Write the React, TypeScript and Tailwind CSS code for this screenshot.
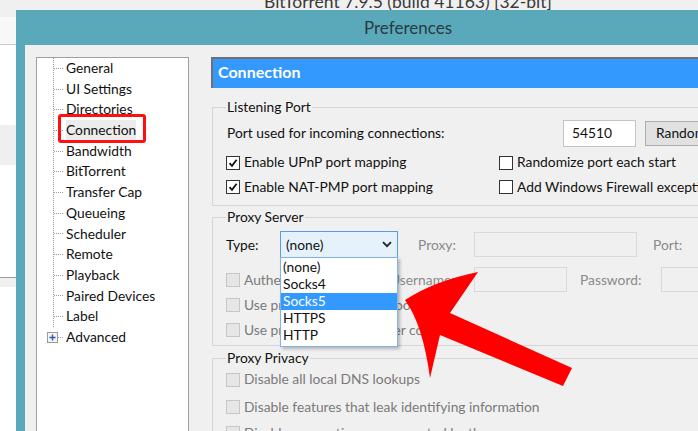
import React from "react";

const treeItems = [
  "General",
  "UI Settings",
  "Directories",
  "Connection",
  "Bandwidth",
  "BitTorrent",
  "Transfer Cap",
  "Queueing",
  "Scheduler",
  "Remote",
  "Playback",
  "Paired Devices",
  "Label",
];

const proxyTypes = ["(none)", "Socks4", "Socks5", "HTTPS", "HTTP"];

function CheckBox({ checked, disabled }: { checked?: boolean; disabled?: boolean }) {
  return (
    <span
      className={
        disabled
          ? "flex h-[14px] w-[14px] shrink-0 items-center justify-center border border-[#c6c6c6] bg-[#e6e6e6]"
          : "flex h-[14px] w-[14px] shrink-0 items-center justify-center border border-[#333] bg-white"
      }
    >
      {checked && (
        <svg width="10" height="10" viewBox="0 0 10 10">
          <path d="M1.5 5.2 L4 7.8 L8.6 1.8" fill="none" stroke="#111" strokeWidth="1.8" />
        </svg>
      )}
    </span>
  );
}

function CheckRow({
  label,
  checked,
  disabled,
  className = "",
}: {
  label: string;
  checked?: boolean;
  disabled?: boolean;
  className?: string;
}) {
  return (
    <div className={`flex items-center gap-[4px] ${className}`}>
      <CheckBox checked={checked} disabled={disabled} />
      <span className={disabled ? "text-[#7a7a7a]" : "text-[#111]"}>{label}</span>
    </div>
  );
}

function Group({ title, children, className = "" }: { title: string; children: React.ReactNode; className?: string }) {
  return (
    <fieldset className={`border border-[#d5d5d5] pl-[13px] ${className}`}>
      <legend className="px-[1px] text-[#111]">{title}</legend>
      {children}
    </fieldset>
  );
}

export default function App() {
  return (
    <div
      className="relative h-[431px] w-[698px] overflow-hidden bg-white text-[13.8px]"
      style={{ fontFamily: "Lato, 'Noto Sans', sans-serif" }}
    >
      {/* main window behind */}
      <div className="flex h-[10px] bg-[#f0f0f0] pl-[264px]">
        <span className="whitespace-nowrap text-[17.5px] leading-[4px] text-[#3a3a3a]">
          BitTorrent 7.9.5 (build 41163) [32-bit]
        </span>
      </div>
      <div className="flex w-[16px] flex-col">
        <div className="h-[7px] bg-[#f0f0f0]" />
        <div className="h-[28px] border-b border-[#c8c8c8] bg-[#f8f8f8]" />
        <div className="h-[80px] bg-white" />
        <div className="h-[40px] bg-[#efefef]" />
        <div className="h-[112px] bg-white" />
        <div className="h-[10px] border-t border-[#9a9a9a] bg-[#f0f0f0]" />
        <div className="h-[200px] bg-white" />
      </div>

      {/* preferences dialog */}
      <div className="absolute left-[16px] top-[10px] flex h-[460px] w-[784px] flex-col bg-[#5aa9ba]">
        <div className="flex h-[35px] items-center justify-center text-[17px] text-[#2a3a40]">Preferences</div>
        <div className="ml-[9px] flex flex-1 gap-[22px] bg-[#f0f0f0] pl-[11px] pt-[12px]">
          {/* tree */}
          <div className="w-[153px] shrink-0 border border-[#9a9ea6] bg-white">
            <div className="ml-[16px] border-l border-dotted border-[#9a9a9a]">
              {treeItems.map((item) => (
                <div key={item} className="flex h-[20.7px] items-center">
                  <span className="mr-[3px] w-[9px] border-t border-dotted border-[#9a9a9a]" />
                  <span className={item === "Connection" ? "bg-[#ececec] text-[#111]" : "text-[#111]"}>{item}</span>
                </div>
              ))}
            </div>
            <div className="flex h-[20.7px] items-center pl-[10px]">
              <span className="flex h-[11px] w-[11px] items-center justify-center border border-[#9a9a9a] bg-[#f4f4f4]">
                <svg width="7" height="7" viewBox="0 0 7 7">
                  <path d="M0.5 3.5 H6.5 M3.5 0.5 V6.5" stroke="#2a5ca8" strokeWidth="1.4" />
                </svg>
              </span>
              <span className="mr-[3px] w-[5px] border-t border-dotted border-[#9a9a9a]" />
              <span className="text-[#111]">Advanced</span>
            </div>
          </div>

          {/* settings page */}
          <div className="flex w-[560px] flex-col">
            <div className="flex h-[31px] items-center border-l-2 border-t-2 border-[#707070] bg-[#3399ff] pb-[3px] pl-[5px] text-[16px] font-bold text-white">
              Connection
            </div>

            <Group title="Listening Port" className="ml-[1px] mt-[9px] pb-[5px]">
              <div className="mt-[2px] flex h-[27px] items-center pl-[1px]">
                <span className="w-[336px] text-[#111]">Port used for incoming connections:</span>
                <div className="flex h-[27px] w-[73px] items-center border border-[#c4c4c4] bg-white pl-[8px] text-[#111]">
                  54510
                </div>
                <div className="ml-[9px] flex h-[25px] w-[70px] items-center border border-[#adadad] bg-[#e1e1e1] pl-[10px] text-[#111]">
                  Random
                </div>
              </div>
              <div className="mt-[4px] flex h-[24px] items-center">
                <CheckRow label="Enable UPnP port mapping" checked className="w-[273px]" />
                <CheckRow label="Randomize port each start" />
              </div>
              <div className="flex h-[25px] items-center">
                <CheckRow label="Enable NAT-PMP port mapping" checked className="w-[273px]" />
                <CheckRow label="Add Windows Firewall exception" />
              </div>
            </Group>

            <Group title="Proxy Server" className="ml-[1px] mt-[1px] pb-[3px]">
              <div className="mt-[4px] flex h-[27px] items-center">
                <span className="w-[54px] text-[#111]">Type:</span>
                <div className="flex h-[27px] w-[118px] items-center justify-between border border-[#569de5] bg-[#e5f1fb] pl-[5px] pr-[5px] text-[#111]">
                  (none)
                  <svg width="10" height="7" viewBox="0 0 10 7">
                    <path d="M1 1.2 L5 5.2 L9 1.2" fill="none" stroke="#222" strokeWidth="1.8" />
                  </svg>
                </div>
                <span className="ml-[20px] w-[56px] text-[#8a8a8a]">Proxy:</span>
                <div className="h-[25px] w-[163px] border border-[#d9d9d9] bg-[#f0f0f0]" />
                <span className="ml-[16px] text-[#8a8a8a]">Port:</span>
              </div>
              <div className="mt-[9px] flex h-[25px] items-center">
                <CheckRow label="Authentication" disabled className="w-[164px]" />
                <span className="w-[84px] text-[#8a8a8a]">Username:</span>
                <div className="h-[25px] w-[93px] border border-[#d9d9d9] bg-[#f0f0f0]" />
                <span className="ml-[13px] w-[81px] text-[#8a8a8a]">Password:</span>
                <div className="h-[25px] w-[60px] border border-[#d9d9d9] bg-[#f0f0f0]" />
              </div>
              <div className="flex h-[25px] items-center">
                <CheckRow label="Use proxy for hostname lookups" disabled />
              </div>
              <div className="flex h-[25px] items-center">
                <CheckRow label="Use proxy for peer-to-peer connections" disabled />
              </div>
            </Group>

            <Group title="Proxy Privacy" className="ml-[1px] mt-[2px] pb-[5px]">
              <div className="flex h-[21px] items-center">
                <CheckRow label="Disable all local DNS lookups" disabled />
              </div>
              <div className="mt-[4px] flex h-[26px] items-center">
                <CheckRow label="Disable features that leak identifying information" disabled />
              </div>
              <div className="flex h-[26px] items-center">
                <CheckRow label="Disable connections unsupported by the proxy" disabled />
              </div>
            </Group>
          </div>
        </div>
      </div>

      {/* red highlight round the Connection item */}
      <div className="absolute left-[58px] top-[114px] h-[29px] w-[88px] rounded-[3px] border-[3px] border-[#ff1010]" />

      {/* open proxy type list */}
      <div className="absolute left-[280px] top-[257px] flex w-[118px] flex-col border border-[#7eb4ea] bg-white pb-[2px] pt-[1px] shadow-[2px_2px_3px_rgba(0,0,0,0.25)]">
        {proxyTypes.map((t) => (
          <div
            key={t}
            className={
              t === "Socks5"
                ? "flex h-[17px] items-center bg-[#3399ff] pl-[2px] text-white"
                : "flex h-[17px] items-center pl-[2px] text-[#111]"
            }
          >
            {t}
          </div>
        ))}
      </div>

      {/* red arrow */}
      <svg className="absolute left-0 top-0" width="698" height="431" viewBox="0 0 698 431">
        <path
          d="M405 300 Q434 281 478 272 L450 313 L572 368 L563 386 L440 335 L430 378 Q423 325 405 300 Z"
          fill="#ff0000"
        />
      </svg>
    </div>
  );
}
